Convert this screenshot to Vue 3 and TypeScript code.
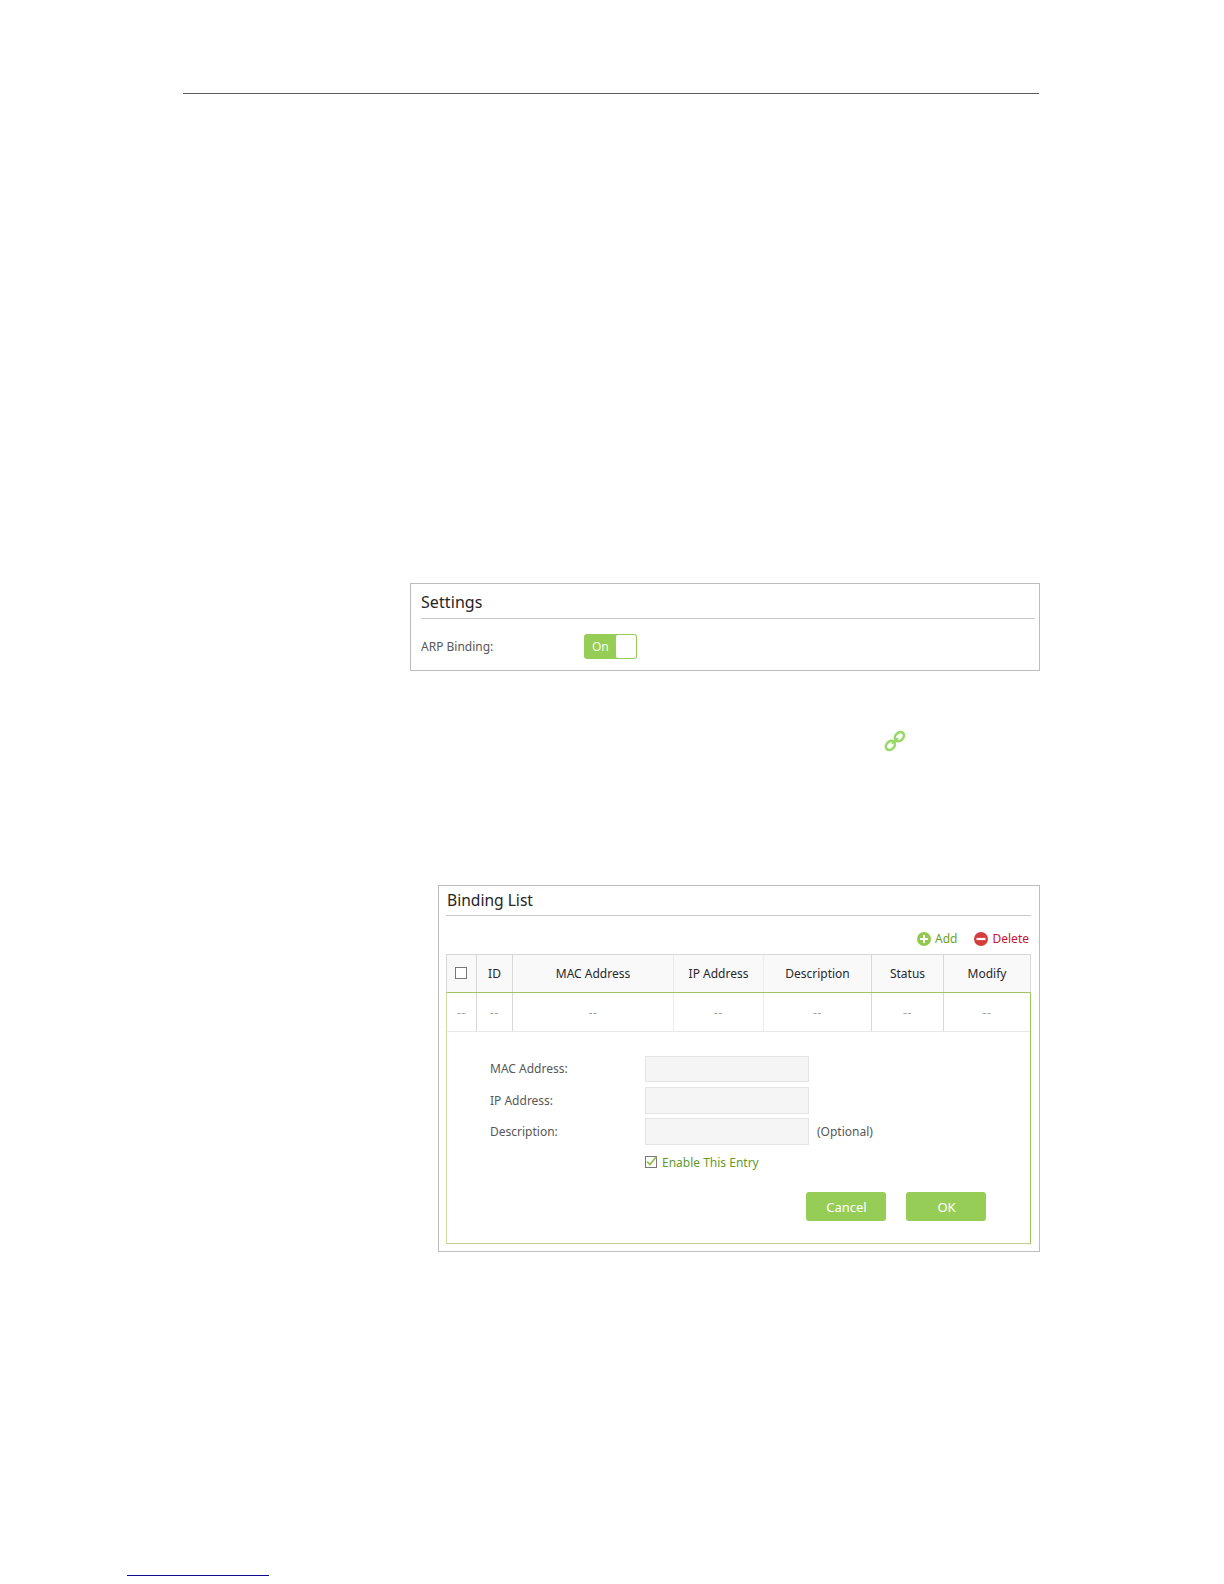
<script setup lang="ts">
import { ref } from 'vue'

interface Column { title: string; width: number; strong: boolean }
interface Field { label: string; note: string; height: number; gap: number }

const columns: Column[] = [
  { title: '', width: 30, strong: true },
  { title: 'ID', width: 36, strong: true },
  { title: 'MAC Address', width: 161, strong: false },
  { title: 'IP Address', width: 90, strong: false },
  { title: 'Description', width: 108, strong: true },
  { title: 'Status', width: 72, strong: true },
  { title: 'Modify', width: 86, strong: false },
]

const fields: Field[] = [
  { label: 'MAC Address:', note: '', height: 26, gap: 5 },
  { label: 'IP Address:', note: '', height: 27, gap: 4 },
  { label: 'Description:', note: '(Optional)', height: 27, gap: 11 },
]

const bindingOn = ref(true)
const entryEnabled = ref(true)
</script>

<template>
  <main class="page">
    <hr class="rule-top" />

    <section class="panel settings">
      <h2>Settings</h2>
      <div class="setting-row">
        <span class="setting-label">ARP Binding:</span>
        <button class="toggle" @click="bindingOn = !bindingOn">
          <span class="toggle-text">{{ bindingOn ? 'On' : 'Off' }}</span>
          <span class="knob"></span>
        </button>
      </div>
    </section>

    <svg class="link-icon" width="22" height="22" viewBox="0 0 22 22" fill="none" stroke="#97d866" stroke-width="2.6">
      <ellipse cx="6.4" cy="15.4" rx="5.1" ry="3.9" transform="rotate(-45 6.4 15.4)" />
      <ellipse cx="15.4" cy="6.6" rx="5.1" ry="3.9" transform="rotate(-45 15.4 6.6)" />
      <path d="M8 13.8l6-5.8" stroke-width="1.8" />
    </svg>

    <section class="panel binding">
      <h2>Binding List</h2>
      <div class="actions">
        <span class="action add">
          <svg width="14" height="14" viewBox="0 0 14 14"><circle cx="7" cy="7" r="7" fill="#94c951" /><path d="M7 3v8M3 7h8" stroke="#fff" stroke-width="2" /></svg>
          Add
        </span>
        <span class="action delete">
          <svg width="14" height="14" viewBox="0 0 14 14"><circle cx="7" cy="7" r="7" fill="#d63c3c" /><path d="M2.5 7h9" stroke="#fff" stroke-width="2.2" /></svg>
          Delete
        </span>
      </div>

      <div class="grid head">
        <div v-for="(c, i) in columns" :key="i" class="cell" :class="{ strong: c.strong }" :style="{ width: c.width + 'px' }">
          <span v-if="i === 0" class="box"></span>
          <template v-else>{{ c.title }}</template>
        </div>
      </div>
      <div class="editor">
        <div class="grid empty">
          <div v-for="(c, i) in columns" :key="i" class="cell" :class="{ strong: c.strong }" :style="{ width: c.width + 'px' }">--</div>
        </div>
        <form class="form" @submit.prevent>
          <label v-for="f in fields" :key="f.label" class="field" :style="{ marginBottom: f.gap + 'px' }">
            <span class="field-label">{{ f.label }}</span>
            <input type="text" :style="{ height: f.height + 'px' }" />
            <span class="note">{{ f.note }}</span>
          </label>
          <div class="enable" @click="entryEnabled = !entryEnabled">
            <span class="box small">
              <svg v-if="entryEnabled" width="12" height="12" viewBox="0 0 12 12" fill="none"><path d="M2 5.5l3 3L11.3 .8" stroke="#90bd46" stroke-width="1.7" /></svg>
            </span>
            <span class="enable-text">Enable This Entry</span>
          </div>
          <div class="buttons">
            <button>Cancel</button>
            <button class="ok">OK</button>
          </div>
        </form>
      </div>
    </section>

    <hr class="rule-bottom" />
  </main>
</template>

<style>
body { margin: 0; background: #fff; }
</style>

<style scoped>
* { box-sizing: border-box; }
.page {
  display: flex;
  flex-direction: column;
  width: 1224px;
  height: 1584px;
  overflow: hidden;
  background: #fff;
  font: 12px/16px "Noto Sans", "DejaVu Sans", sans-serif;
  color: #585858;
}
hr { border: 0; height: 1px; flex: none; }
.rule-top { width: 856px; margin: 93px 0 0 183px; background: #5c5c5c; }
.rule-bottom { width: 142px; margin: 323px 0 0 127px; background: #0c0c90; }
.panel { flex: none; border: 1px solid #bcbcbc; }
h2 {
  margin: 0;
  font-size: 16px;
  font-weight: 400;
  line-height: 20px;
  color: #252525;
  border-bottom: 1px solid #c8c8c8;
}
button { border: 0; padding: 0; background: #96cd56; color: #fff; font: inherit; }

.settings { width: 630px; height: 88px; margin: 489px 0 0 410px; padding: 8px 4px 0 10px; }
.settings h2 { height: 27px; line-height: 21px; letter-spacing: .08px; }
.setting-row { display: flex; margin-top: 15px; height: 25px; align-items: center; }
.setting-label { width: 163px; }
.toggle {
  display: flex;
  align-items: center;
  justify-content: space-between;
  width: 53px;
  height: 25px;
  padding: 0 1px 0 8px;
  border-radius: 3px;
}
.toggle-text { color: #f3fbe9; }
.knob { width: 20px; height: 23px; border-radius: 2px; background: #fff; }

.link-icon { flex: none; margin: 59px 0 0 884px; }

.binding { width: 602px; height: 367px; margin: 133px 0 0 438px; padding: 0 8px 0 7px; }
.binding h2 { height: 30px; padding: 4px 0 0 1px; font-size: 15.6px; line-height: 21px; }
.actions { display: flex; justify-content: flex-end; height: 38px; padding: 7px 2px 0 0; }
.action { display: flex; height: 32px; align-items: center; gap: 4px; }
.action svg { margin-bottom: 1px; }
.add { color: #6a9f26; margin-right: 16px; }
.delete { gap: 5px; color: #c71434; }
.grid { display: flex; }
.cell {
  display: flex;
  flex: none;
  align-items: center;
  justify-content: center;
  border-right: 1px solid #ececec;
}
.cell.strong { border-right-color: #d8d8d8; }
.head {
  height: 39px;
  background: #f9f9f9;
  border: 1px solid #d8d8d8;
  border-bottom: 1px solid #a0c563;
  color: #28282d;
}
.head .cell:last-child, .empty .cell:last-child { border-right: 0; }
.head .cell:first-child { padding: 0 1px 1px 0; }
.box { display: block; width: 12px; height: 12px; border: 1px solid #777; background: #fff; }
.editor {
  height: 251px;
  border: 1px solid #9bc959;
  border-top: 0;
  border-left-color: #cddf9f;
  border-bottom-color: #bdd38c;
}
.empty { height: 39px; border-bottom: 1px solid #e8e8e8; color: #a0a0a0; letter-spacing: .6px; }
.empty .cell { padding-top: 2px; }
.form { padding: 24px 44px 0 43px; }
.field { display: flex; align-items: center; }
.field-label { width: 155px; }
.field input {
  width: 164px;
  padding: 0 6px;
  border: 1px solid #e4e4e4;
  border-radius: 0;
  background: #f5f5f5;
  font: inherit;
  outline: none;
}
.note { margin-left: 8px; }
.enable { display: flex; align-items: center; height: 12px; margin-left: 155px; gap: 5px; color: #64992b; }
.enable-text { padding-top: 2px; }
.small svg { display: block; margin: -1px; }
.buttons { display: flex; justify-content: flex-end; gap: 20px; margin-top: 24px; }
.buttons button { width: 80px; height: 29px; padding: 1px 0 0 1px; border-radius: 3px; font-size: 13px; line-height: 28px; }
</style>
